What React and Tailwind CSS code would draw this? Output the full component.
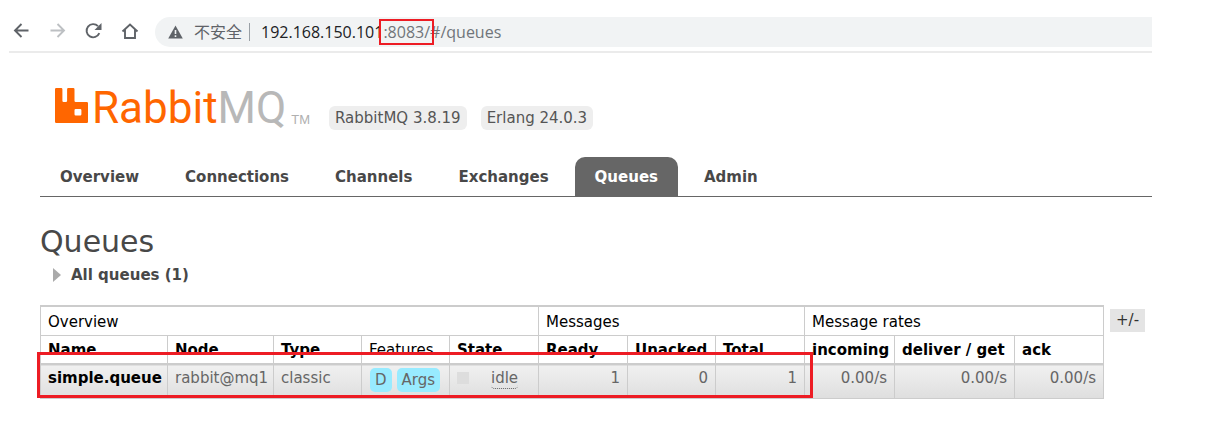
import React from "react";

const tabs = ["Overview", "Connections", "Channels", "Exchanges", "Queues", "Admin"];

const columnWidths = [
  "w-[127px]", "w-[106px]", "w-[88px]", "w-[88px]", "w-[89px]", "w-[89px]",
  "w-[88px]", "w-[89px]", "w-[90px]", "w-[120px]", "w-[89px]",
];

const headings = [
  "Name", "Node", "Type", "Features", "State", "Ready",
  "Unacked", "Total", "incoming", "deliver / get", "ack",
];

function BrowserBar() {
  return (
    <header className="ml-[9px] flex h-[53px] items-start border-b-2 border-[#ebebeb] pt-[17px]">
      <div className="flex h-[30px] items-center gap-[14px] pl-px">
        <button aria-label="Back" className="w-[22px]">
          <svg width="22" height="22" viewBox="0 0 22 22" fill="none" stroke="#5f6368" strokeWidth="1.9">
            <path d="M18.500 9.500H5M11.500 3L5 9.500L11.500 16" />
          </svg>
        </button>
        <button aria-label="Forward" className="w-[22px]">
          <svg width="22" height="22" viewBox="0 0 22 22" fill="none" stroke="#bdc0c3" strokeWidth="1.9">
            <path d="M4.500 9.500H18M11.500 3L18 9.500L11.500 16" />
          </svg>
        </button>
        <button aria-label="Reload" className="w-[22px]">
          <svg width="22" height="22" viewBox="0 0 22 22" fill="none">
            <path d="M17.300 12.200A6.600 6.600 0 1 1 16 5.200" stroke="#5f6368" strokeWidth="1.9" />
            <path d="M19.500 2V9H12.500Z" fill="#5f6368" />
          </svg>
        </button>
        <button aria-label="Home" className="w-[22px]">
          <svg width="22" height="22" viewBox="0 0 22 22" fill="none" stroke="#5f6368" strokeWidth="1.9">
            <path d="M4.500 10.500L12 3.600L19.500 10.500M7 8.500V17H17V8.500" />
          </svg>
        </button>
      </div>
      <div className="ml-[15px] flex h-[30px] flex-1 items-center rounded-l-full bg-[#f1f3f4] pl-[13px] font-['Open_Sans','Noto_Sans_CJK_SC',sans-serif] text-[16px] leading-[24px]">
        <svg width="15" height="14" viewBox="0 0 15 14" aria-hidden="true">
          <path d="M7.500 .5L14.800 13.500H.2Z" fill="#5f6368" />
          <path d="M7.500 5V9M7.500 10.300V12" stroke="#f1f3f4" strokeWidth="1.600" />
        </svg>
        <span className="ml-[11px] text-[#5f6368]">不安全</span>
        <span className="mx-[7px] h-[18px] w-px bg-[#9aa0a6]" />
        <span className="ml-1 text-[#202124]">192.168.150.101</span>
        <span className="relative text-[#70757a]">
          :8083/
          <span className="absolute -inset-x-1 -inset-y-px border-2 border-[#ed1c24]" />
        </span>
        <span className="text-[#70757a]">#/queues</span>
      </div>
    </header>
  );
}

function Logo() {
  return (
    <div className="flex items-start">
      <svg width="33" height="35" viewBox="0 0 33 35" className="mt-[6px]" aria-hidden="true">
        <path
          fillRule="evenodd"
          fill="#ff6600"
          d="M1.200 0H6.200Q7.400 0 7.400 1.200V12.800Q7.400 14 8.600 14H10.900Q12.100 14 12.100 12.800V1.200Q12.100 0 13.300 0H18.300Q19.500 0 19.500 1.200V12.800Q19.500 14 20.700 14H31.800Q33 14 33 15.200V33.800Q33 35 31.800 35H1.200Q0 35 0 33.800V1.200Q0 0 1.200 0ZM20.700 21Q19.500 21 19.500 22.200V26.300Q19.500 27.500 20.700 27.500H25.200Q26.400 27.500 26.400 26.300V22.200Q26.400 21 25.200 21Z"
        />
      </svg>
      <span className="ml-[4px] font-['Roboto',sans-serif] text-[44px] leading-[52px] text-[#ff6600]">
        Rabbit<span className="text-[#b8b8b8]">MQ</span>
      </span>
      <span className="ml-[5px] mt-[29px] font-['Liberation_Sans',sans-serif] text-[13px] leading-[18px] text-[#b0b0b0]">TM</span>
    </div>
  );
}

const cell = "border border-[#ccc] px-[7px] ";
const head = cell + "pt-[2px] ";
const data = cell + "pt-[3px] ";

function QueueTable() {
  return (
    <div className="relative">
      <table className="w-[1063px] table-fixed border-collapse text-left text-[15px] leading-[20px]">
        <colgroup>
          {columnWidths.map((w, i) => <col key={i} className={w} />)}
        </colgroup>
        <thead className="text-black">
          <tr className="h-[29px] border-t-2 border-[#ccc]">
            <th colSpan={5} className={head + "font-normal"}>Overview</th>
            <th colSpan={3} className={head + "font-normal"}>Messages</th>
            <th colSpan={3} className={head + "font-normal"}>Message rates</th>
          </tr>
          <tr className="h-[29px] whitespace-nowrap">
            {headings.map((h) => (
              <th key={h} className={head + (h === "Features" ? "font-normal" : "font-bold")}>{h}</th>
            ))}
          </tr>
        </thead>
        <tbody>
          <tr className="h-[34px] whitespace-nowrap border-t-2 border-[#ccc] bg-linear-to-b from-[#f0f0f0] to-[#dfdfdf] align-top text-[#666]">
            <td className={data + "font-bold text-black"}><a href="#/queues/simple.queue">simple.queue</a></td>
            <td className={data}>rabbit@mq1</td>
            <td className={data}>classic</td>
            <td className={data}>
              <div className="flex gap-[5px] pl-px">
                <span className="rounded-[5px] bg-[#98ebff] px-[5px] leading-[24px]">D</span>
                <span className="rounded-[5px] bg-[#98ebff] px-[5px] leading-[24px]">Args</span>
              </div>
            </td>
            <td className={data}>
              <div className="flex items-start">
                <span className="mt-[4px] size-3 bg-[#ddd]" />
                <span className="ml-[22px] rounded-b-[4px] border-b border-dotted border-[#666]">idle</span>
              </div>
            </td>
            <td className={data + "text-right"}>1</td>
            <td className={data + "text-right"}>0</td>
            <td className={data + "text-right"}>1</td>
            <td className={data + "text-right"}>0.00/s</td>
            <td className={data + "text-right"}>0.00/s</td>
            <td className={data + "text-right"}>0.00/s</td>
          </tr>
        </tbody>
      </table>
      <span className="absolute -left-[3px] top-[47px] h-[46px] w-[776px] border-3 border-[#ed1c24]" />
    </div>
  );
}

export default function App() {
  return (
    <div className="mr-[62px] bg-white font-['DejaVu_Sans',sans-serif] text-[15px] text-[#484848]">
      <BrowserBar />
      <main className="pl-10">
        <div className="flex items-start pl-[15px] pt-[29px]">
          <Logo />
          <div className="ml-[19px] mt-[24px] flex gap-[14px] leading-[24px] text-[#555]">
            <span className="rounded-md bg-[#eee] px-[6px]">RabbitMQ 3.8.19</span>
            <span className="rounded-md bg-[#eee] px-[6px]">Erlang 24.0.3</span>
          </div>
        </div>
        <nav className="mt-[23px] flex gap-[6px] border-b border-[#666] font-bold leading-[37px]">
          {tabs.map((t) => (
            <a
              key={t}
              href={"#/" + t.toLowerCase()}
              className={t === "Queues" ? "rounded-t-[10px] bg-[#666] px-5 pt-[2px] text-white" : "px-5 pt-[2px]"}
            >
              {t}
            </a>
          ))}
        </nav>
        <h1 className="mt-[27px] text-[30px] leading-[36px]">Queues</h1>
        <h2 className="ml-[13px] mt-[5px] flex items-center gap-[10px] font-bold leading-[20px]">
          <svg width="8" height="14" viewBox="0 0 8 14" aria-hidden="true">
            <path d="M0 0L8 7L0 14Z" fill="#aaa" />
          </svg>
          All queues (1)
        </h2>
        <div className="mt-[20px] flex items-start gap-[6px]">
          <QueueTable />
          <button className="mt-[4px] bg-[#e4e4e4] px-[6px] leading-[23px] text-[#333]">+/-</button>
        </div>
      </main>
    </div>
  );
}
